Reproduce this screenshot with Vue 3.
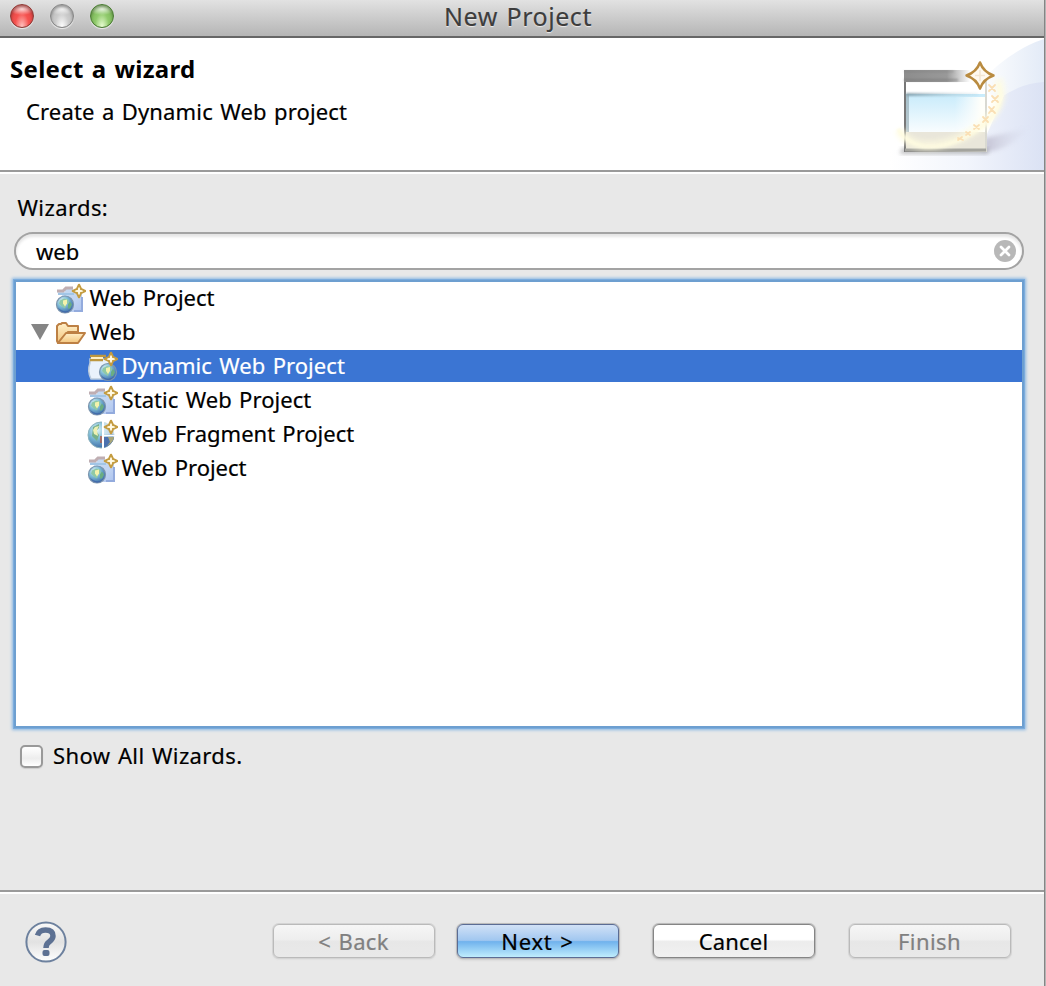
<script setup>
const rows = [
  { label: 'Web Project', icon: 'web', level: 'root', fit: 'f-project' },
  { label: 'Web', icon: 'folder', level: 'root', open: true, fit: 'f-web' },
  { label: 'Dynamic Web Project', icon: 'dynamic', level: 'child', selected: true, fit: 'f-dynamic' },
  { label: 'Static Web Project', icon: 'web', level: 'child', fit: 'f-static' },
  { label: 'Web Fragment Project', icon: 'fragment', level: 'child', fit: 'f-fragment' },
  { label: 'Web Project', icon: 'web', level: 'child', fit: 'f-project' },
]
const buttons = [
  { label: '< Back', kind: 'disabled', fit: 'f-back' },
  { label: 'Next >', kind: 'primary', fit: 'f-next' },
  { label: 'Cancel', kind: 'normal', fit: 'f-cancel' },
  { label: 'Finish', kind: 'disabled', fit: 'f-finish' },
]
</script>

<template>
  <div class="window">
    <svg class="defs" width="0" height="0">
      <defs>
        <radialGradient id="globe" cx=".35" cy=".3" r=".75">
          <stop offset="0" stop-color="#e2f5f8" /><stop offset=".45" stop-color="#7fbcd6" /><stop offset="1" stop-color="#3a68a6" />
        </radialGradient>
        <linearGradient id="page" x1="0" y1="0" x2="1" y2="1">
          <stop offset="0" stop-color="#c4dbf0" /><stop offset=".6" stop-color="#c2d5f3" /><stop offset="1" stop-color="#adc3ee" />
        </linearGradient>
        <linearGradient id="fold" x1="0" y1="0" x2="0" y2="1">
          <stop offset="0" stop-color="#fff0ca" /><stop offset="1" stop-color="#f3c57c" />
        </linearGradient>
        <g id="spark">
          <path d="M0-6.2L2-2L6.200 0L2 2L0 6.200L-2 2L-6.200 0L-2-2Z" fill="#fff6d8" stroke="#c49c40" stroke-width="2.200" stroke-linejoin="round" />
          <path d="M0-3.500V3.500M-3.500 0H3.500" stroke="#fffbe8" stroke-width="1.600" />
        </g>
        <g id="earth">
          <circle r="8.500" fill="url(#globe)" stroke="#7d95ae" stroke-width="1.200" />
          <path d="M-5-4L-1-6L3-5L4-2L1 0L0 4L-3 2L-6-1Z" fill="#8fc9a5" />
          <path d="M3 0L5-3L7 0L5 4L3 4Z" fill="#6aae82" />
          <path d="M-2-4L2-5L2-1L0 2L-2-1Z" fill="#f3f2ac" />
          <path d="M-7 3Q0 10 7 4Q3 9-1 8Q-6 7-7 3" fill="#3d63a8" opacity=".7" />
        </g>
      </defs>
    </svg>

    <header class="titlebar">
      <div class="lights">
        <i class="light red"></i><i class="light gray"></i><i class="light green"></i>
      </div>
      <span class="title">New Project</span>
    </header>

    <section class="banner">
      <div class="intro">
        <h1><span class="f-heading">Select a wizard</span></h1>
        <p><span class="f-desc">Create a Dynamic Web project</span></p>
      </div>
      <svg class="art" width="164" height="132" viewBox="0 0 164 132">
        <defs>
          <linearGradient id="sweep" x1="0" y1="0" x2="1" y2="0">
            <stop offset="0" stop-color="#fff" /><stop offset=".5" stop-color="#f2f5fc" /><stop offset="1" stop-color="#dbe2f4" />
          </linearGradient>
          <linearGradient id="wing" x1="0" y1="0" x2="1" y2="0">
            <stop offset="0" stop-color="#fff" /><stop offset="1" stop-color="#e3ebf7" />
          </linearGradient>
          <linearGradient id="bar" x1="0" x2="1"><stop offset="0" stop-color="#8d8d8d" /><stop offset=".55" stop-color="#999" /><stop offset=".85" stop-color="#fff" /></linearGradient>
          <linearGradient id="side" x1="0" x2="1"><stop offset="0" stop-color="#777" /><stop offset="1" stop-color="#d9d9d2" /></linearGradient>
          <linearGradient id="sky" x1="0" y1="0" x2="0" y2="1"><stop offset="0" stop-color="#c8ebfb" /><stop offset="1" stop-color="#fff" /></linearGradient>
          <linearGradient id="fadeSky" x1="0" x2="1"><stop offset=".6" stop-color="#fff" stop-opacity="0" /><stop offset=".95" stop-color="#fffffa" /></linearGradient>
          <linearGradient id="edge" x1="0" x2="1"><stop offset="0" stop-color="#718c99" /><stop offset="1" stop-color="#a6c4d0" stop-opacity=".2" /></linearGradient>
          <linearGradient id="shadow" x1="0" x2="1"><stop offset="0" stop-color="#a7a3b8" /><stop offset="1" stop-color="#d4d7e9" stop-opacity="0" /></linearGradient>
          <filter id="soft" x="-30%" y="-30%" width="160%" height="160%"><feGaussianBlur stdDeviation="2.3" /></filter>
          <filter id="slight" x="-5%" y="-50%" width="110%" height="200%"><feGaussianBlur stdDeviation=".8" /></filter>
        </defs>
        <path d="M10 132V112H100L125 55Q140 44 164 42V132Z" fill="url(#sweep)" />
        <path d="M98 46Q130 12 164 1V44Q140 45 117 62Z" fill="url(#wing)" />
        <path d="M105 100L151 89Q129 113 104 114Z" fill="url(#shadow)" opacity=".6" filter="url(#soft)" />
        <path d="M20 116H108V110H22Z" fill="#777" opacity=".45" filter="url(#soft)" />
        <rect x="25" y="33" width="81" height="80" fill="#fff" stroke="url(#side)" stroke-width="2" />
        <rect x="24" y="32" width="78" height="12" fill="url(#bar)" />
        <path d="M24 33H74V34H24ZM24 41H78V43H24Z" fill="#777" opacity=".6" filter="url(#slight)" />
        <rect x="26" y="56" width="79" height="43" fill="url(#sky)" />
        <rect x="26" y="55" width="72" height="3" fill="url(#edge)" opacity=".8" filter="url(#slight)" />
        <rect x="26" y="56" width="3" height="42" fill="#8fa5ae" opacity=".6" />
        <rect x="29" y="59" width="76" height="41" fill="url(#fadeSky)" />
        <rect x="26" y="94" width="79" height="17" fill="#e9e6da" />
        <path d="M25 112H106" stroke="#a3a39d" stroke-width="3" />
        <path d="M118 41Q128 66 101 88Q70 110 41 107Q25 104 19 92" fill="none" stroke="#fffce0" stroke-width="10" opacity=".6" filter="url(#soft)" />
        <path d="M118 46Q128 68 101 89Q70 112 42 108Q25 104 18 91" fill="none" stroke="#fffce1" stroke-width="4" opacity=".8" filter="url(#slight)" />
        <g fill="none" stroke="#fadfb4" stroke-width="1.800" stroke-linecap="round">
          <path d="M109 47l6 6m0-6l-6 6M112 58l6 6m0-6l-6 6M109 69l6 6m-1-6l-5 6M103 79l5 5m0-5l-5 5M94 87l5 4m0-4l-5 4M86 94l4 3m0-3l-4 3M78 100l5 2m-1-3l-4 3" />
        </g>
        <path d="M100 24.500Q103.500 34 113.500 37.500Q103.500 41 100 50.500Q96.500 41 86.500 37.500Q96.500 34 100 24.500Z" fill="#fffaf0" stroke="#b98b40" stroke-width="2.500" stroke-linejoin="round" />
        <path d="M100 32V43M95 37.500H105" stroke="#f3e6d2" stroke-width="1.500" />
      </svg>
    </section>

    <main class="body">
      <label class="caption"><span class="f-wizards">Wizards:</span></label>
      <div class="search">
        <span class="query f-query">web</span>
        <svg width="22" height="22" viewBox="0 0 22 22"><circle cx="11" cy="11" r="11" fill="#b8b8b8" /><path d="M7 7l8 8m0-8l-8 8" stroke="#fff" stroke-width="2.700" stroke-linecap="round" /></svg>
      </div>
      <div class="tree">
        <div v-for="(row, i) in rows" :key="i" class="row" :class="[row.level, { selected: row.selected }]">
          <span class="arrow"><svg v-if="row.open" width="20" height="16" viewBox="0 0 20 16"><path d="M1 0H19L10 16Z" fill="#858585" /></svg></span>
          <svg class="icon" width="32" height="32" viewBox="0 0 32 32">
            <g v-if="row.icon === 'web'">
              <path d="M3 10H11V7H19V10H28V30H8V13Z" fill="url(#page)" />
              <path d="M3 9H9L12 6H19" fill="none" stroke="#bfaeb2" stroke-width="3" />
              <path d="M4 12H20" stroke="#a2c6e6" stroke-width="2" />
              <path d="M28 15V29H20" fill="none" stroke="#93abdd" stroke-width="2" />
              <use href="#earth" x="11" y="22.500" /><use href="#spark" x="25" y="9" />
            </g>
            <g v-else-if="row.icon === 'folder'" transform="translate(1 0)" stroke="#bd8044" stroke-width="2" stroke-linejoin="round">
              <path d="M2 25V10L4 8H6L7 7H11L13 10H23V16H13L3 27Z" fill="url(#fold)" />
              <path d="M3 27L11 17H30L23 27Z" fill="url(#fold)" />
            </g>
            <g v-else-if="row.icon === 'dynamic'">
              <path d="M4 9H23V29H5Q1 21 4 13Z" fill="#eaf2fb" stroke="#bccbdc" stroke-width="1.500" />
              <path d="M4 6H20M4 10H17" stroke="#bd973f" stroke-width="2.500" />
              <path d="M5 8H17" stroke="#fff0c4" stroke-width="2" />
              <use href="#earth" x="22" y="22" /><use href="#spark" x="25" y="9" />
            </g>
            <g v-else>
              <circle cx="15" cy="17" r="13" fill="url(#globe)" stroke="#8bb2bd" />
              <path d="M7 9L13 6V10L10 13L13 17L11 23L6 18Z" fill="#76b08a" /><path d="M9 9L13 8L11 12L12 18L8 16L7 12Z" fill="#eef0b2" />
              <path d="M17 19H28Q27 27 17 30Z" fill="#4c72ae" /><path d="M21 28L24 24L22 19H28Q27 25 21 28" fill="#a9a679" />
              <path d="M17 3V31M17 17.500H30" stroke="#fff" stroke-width="2" /><path d="M15 18V25" stroke="#b45a48" stroke-width="1.500" />
              <path d="M18 1H31V16H18Z" fill="#fff" opacity=".6" />
              <use href="#spark" x="25" y="9" />
            </g>
          </svg>
          <span class="name" :class="row.fit">{{ row.label }}</span>
        </div>
      </div>
      <label class="show"><i class="check"></i><span class="f-show">Show All Wizards.</span></label>
    </main>

    <footer class="footer">
      <svg class="help" width="42" height="42" viewBox="0 0 42 42">
        <defs><linearGradient id="helpFill" x1="0" y1="0" x2="0" y2="1"><stop offset="0" stop-color="#fafafa" /><stop offset=".5" stop-color="#e2e2e2" /><stop offset="1" stop-color="#fff" /></linearGradient></defs>
        <circle cx="21" cy="21" r="19.600" fill="url(#helpFill)" stroke="#6d819e" stroke-width="2" />
        <path d="M12.500 14.500Q14 9 20.500 9Q28 9 28 15Q28 18 24 21Q21 23 21 27" fill="none" stroke="#5d7193" stroke-width="5.500" />
        <rect x="17.500" y="29" width="7" height="6" rx="2" fill="#5d7193" />
      </svg>
      <div class="buttons">
        <button v-for="b in buttons" :key="b.label" :class="b.kind"><span :class="b.fit">{{ b.label }}</span></button>
      </div>
    </footer>
  </div>
</template>

<style>
body { margin: 0; overflow: hidden; }
</style>

<style scoped>
* { box-sizing: border-box; }
.window { position: relative; width: 1046px; height: 986px; display: flex; flex-direction: column; background: #e8e8e8; color: #000; font: 22px/30px "Noto Sans", sans-serif; word-spacing: 1.5px; white-space: nowrap; -webkit-text-stroke: .2px; }
.window::after { content: ""; position: absolute; z-index: 2; right: 0; top: 0; width: 2px; height: 986px; background: linear-gradient(90deg, #858585 50%, #b4b4b4 50%); }
.defs { position: absolute; }
.titlebar { position: relative; flex: 0 0 38px; border-bottom: 2px solid #666; background: linear-gradient(#e2e2e2, #b5b5b5); }
.lights { display: flex; gap: 16px; padding: 4px 0 0 10px; }
.light { width: 24px; height: 24px; border-radius: 50%; border: 1.5px solid; box-shadow: 0 1px 1px #eee, inset 0 2px 3px rgba(0,0,0,.3); }
.red { border-color: #8d3934; background: radial-gradient(ellipse 60% 28% at 50% 18%, #fffc, transparent), radial-gradient(ellipse at 50% 100%, #ffc6c3, #f65350 45%, #d84040); }
.gray { border-color: #858585; background: radial-gradient(ellipse 60% 28% at 50% 18%, #fffc, transparent), radial-gradient(ellipse at 50% 100%, #fff, #ccc 45%, #b4b4b4); }
.green { border-color: #487b31; background: radial-gradient(ellipse 60% 28% at 50% 18%, #fffc, transparent), radial-gradient(ellipse at 50% 100%, #ecffd6, #91cb6d 45%, #6fab4c); }
.title { position: absolute; left: 444px; top: 1px; color: #3d3d3d; font-size: 25px; letter-spacing: .55px; text-shadow: 0 1px 1px #eee; }
.banner { flex: 0 0 132px; display: flex; justify-content: space-between; background: #fff; padding-right: 2px; }
.intro { padding-top: 16px; }
h1 { margin: 0; padding-left: 10px; font-size: 24px; line-height: 30px; -webkit-text-stroke: 0; }
p { margin: 12px 0 0; padding-left: 26px; }
.body { flex: 0 0 720px; display: flex; flex-direction: column; border-top: 2px solid #9a9a9a; box-shadow: inset 0 2px #fff; padding: 20px 22px 0 14px; }
.caption { height: 40px; padding-left: 3.5px; }
.search { height: 38px; width: 1010px; display: flex; align-items: center; justify-content: space-between; padding: 0 6px 1px 20px; border: 2px solid #a3a3a3; border-radius: 19px; background: #fff; box-shadow: inset 0 3px 3px #e5e5e5; }
.tree { width: 1010px; height: 448px; margin-top: 10px; border: 2px solid #6d9fd0; background: #fff; box-shadow: 0 0 0 1px #7cadde, 0 0 3px 2px #8ab7e3; }
.row { display: flex; align-items: center; height: 32px; margin-bottom: 2px; }
.arrow { display: flex; width: 38px; padding-left: 14px; }
.child .arrow { width: 70px; }
.icon { flex: none; }
.name { padding: 0 0 2px 3.5px; }
.selected { color: #fff; background: #3b75d3; }
.show { display: flex; align-items: center; gap: 10px; height: 30px; margin: 12px 0 0 6px; }
.check { width: 23px; height: 23px; margin-top: 3px; border: 2px solid #999; border-radius: 5px; background: linear-gradient(#fff, #ededed 60%, #fff); box-shadow: 0 1px 1px #ccc; }
.footer { flex: 1; display: flex; align-items: flex-start; justify-content: space-between; border-top: 2px solid #9a9a9a; box-shadow: inset 0 2px #fff; padding: 29px 35px 0 25px; }
.buttons { display: flex; gap: 34px; padding-top: 3px; }
button { width: 162px; height: 34px; padding: 0; font: inherit; word-spacing: inherit; color: #000; border: 1px solid #858585; border-radius: 6px; background: linear-gradient(#fff 0 45%, #ececec 52%, #f1f1f1); box-shadow: 0 0 0 1px #bbb, 0 1px 3px #aaa; }
button:first-child { margin-right: -12px; }
button span { display: block; line-height: 30px; padding: 0 1px 1px 0; }
button.primary { border-color: #5b6c94; background: linear-gradient(#d1e1f6, #a1c7f0 48%, #70b2ed 52%, #bfedfd); }
button.disabled { color: #808080; border-color: #bababa; background: linear-gradient(#f6f6f6, #eee 45%, #e7e7e7 52%, #e9e9e9); box-shadow: 0 0 0 1px #d4d4d4, 0 1px 2px #ccc; }
.f-heading { letter-spacing: .3px; }
.f-desc { letter-spacing: .15px; }
.f-wizards { letter-spacing: .4px; }
.f-dynamic, .f-static { letter-spacing: .06px; }
.f-show { letter-spacing: .37px; }
.f-back { letter-spacing: .3px; }
.f-next { letter-spacing: .7px; }
.f-cancel { letter-spacing: .2px; }
.f-finish { letter-spacing: .4px; }
</style>
